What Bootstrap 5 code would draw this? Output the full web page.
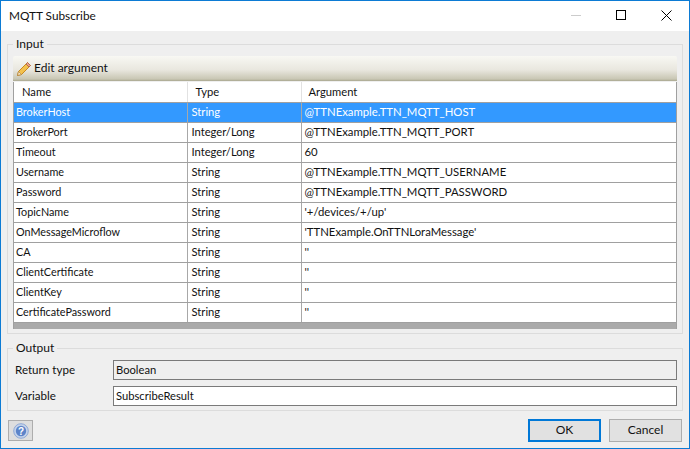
<!doctype html>
<html lang="en">
<head>
<meta charset="utf-8">
<title>MQTT Subscribe</title>
<link href="https://cdn.jsdelivr.net/npm/bootstrap@5.3.0/dist/css/bootstrap.min.css" rel="stylesheet">
<style>
html,body{margin:0;height:449px;overflow:hidden}
body{font-family:"Lato","Noto Sans","Liberation Sans",sans-serif;font-size:12px;line-height:16px;color:#111;background:#efefef}
.win{width:690px;height:449px;border:1px solid #0c7bd4;display:flex;flex-direction:column;background:#efefef}
.titlebar{height:30px;background:#fff;padding-left:8px;font-size:11.8px}
.winbtn{width:45px;height:30px;display:flex;align-items:center;justify-content:center;padding-bottom:2px}
.winbtn.cl{width:46px}
.body-area{padding:6px 6px 0 6px}
.grp{border:1px solid #dcdcdc;margin:0;padding:0 5px;min-width:0}
.grp legend{float:none;width:auto;font-size:12px;line-height:14px;margin:0;padding:0 3px;color:#111}
.grp-in{height:297px}
.grp-out{height:70px;margin-top:7px}
.tool{height:25px;background:linear-gradient(#f8f8f3,#e9e7df 55%,#c9c7b4 92%,#a9a78f);display:flex;align-items:center;padding-left:3px;gap:2px;margin-top:5px;border-radius:2px 2px 0 0}
.tool span{font-size:12px;padding-bottom:2px}
.tbl-wrap{margin-top:1px;background:#aaa;border-left:1px solid #a0a0a0;border-right:1px solid #a0a0a0;height:247px}
.grid{width:100%;table-layout:fixed;margin:0;border-collapse:collapse;font-size:11.2px;background:#fff}
.grid th,.grid td{height:20px;padding:1px 0 0 4px;vertical-align:top;border:0;border-bottom:1px solid #a0a0a0;border-right:1px solid #a8a8a8;font-weight:400;line-height:16px;white-space:nowrap;color:#111;background:#fff;box-shadow:none}
.grid th{padding-top:2px;padding-left:8px;border-right-color:#e2e2e2}
.grid td:first-child{font-size:10.8px;padding-left:2px}
.grid td:nth-child(3){font-size:11.33px;padding-left:3px}
.grid th:nth-child(3){padding-left:7px}
.grid td:last-child,.grid th:last-child{border-right:0}
.grid tr.sel td{background:#3399ff;color:#fff}
.c1{width:173px}.c2{width:114px}
.fld-row{display:flex;align-items:center;height:20px;margin-bottom:6px;padding-left:2px}
.fld-row label{width:98px;margin:0;font-size:11.6px;color:#111}
.fld{flex:1;height:20px;border:1px solid #7a7a7a;padding:0 2px;font-size:11.2px;line-height:18px;color:#111;background:#fff}
.fld.ro{background:#efefef}
.first-row{margin-top:5px}
.foot{padding:9px 7px 0 7px}
.help{width:25px;height:21px;border:1px solid #adadad;background:#dedede;display:flex;align-items:center;justify-content:center}
.dlg{width:73px;height:23px;font-size:12px;line-height:16px;padding:0 0 2px;border-radius:0;background:#e1e1e1;border:1px solid #adadad;color:#111;margin-top:-1px}
.dlg.pri{border:2px solid #0078d7}
</style>
</head>
<body>
<div class="win">
  <div class="titlebar d-flex align-items-center justify-content-between">
    <span>MQTT Subscribe</span>
    <div class="d-flex">
      <div class="winbtn"><svg width="10" height="10" viewBox="0 0 10 10"><path d="M0 5.500h10" stroke="#ccc" fill="none"/></svg></div>
      <div class="winbtn"><svg width="10" height="10" viewBox="0 0 10 10"><rect x=".5" y=".5" width="9" height="9" fill="none" stroke="#000"/></svg></div>
      <div class="winbtn cl"><svg width="11" height="11" viewBox="0 0 11 11"><path d="M.5.5l10 10M10.500.5l-10 10" stroke="#000" fill="none"/></svg></div>
    </div>
  </div>
  <div class="body-area">
    <fieldset class="grp grp-in">
      <legend>Input</legend>
      <div class="tool">
        <svg width="16" height="16" viewBox="0 0 16 16"><path d="M11.500 1.500l3 3-9 9-4 1 1-4z" fill="#f2c14e" stroke="#c98a1e"/><path d="M11.500 1.500l3 3-1.500 1.500-3-3z" fill="#e9a08a" stroke="#b86e4a"/><path d="M2.500 10.500l3 3-4 1z" fill="#f6e3c0" stroke="#a87a3a" stroke-width=".6"/></svg>
        <span>Edit argument</span>
      </div>
      <div class="tbl-wrap">
        <table class="table grid">
          <colgroup><col class="c1"><col class="c2"><col></colgroup>
          <thead><tr><th>Name</th><th>Type</th><th>Argument</th></tr></thead>
          <tbody>
            <tr class="sel"><td>BrokerHost</td><td>String</td><td>@TTNExample.TTN_MQTT_HOST</td></tr>
            <tr><td>BrokerPort</td><td>Integer/Long</td><td>@TTNExample.TTN_MQTT_PORT</td></tr>
            <tr><td>Timeout</td><td>Integer/Long</td><td>60</td></tr>
            <tr><td>Username</td><td>String</td><td>@TTNExample.TTN_MQTT_USERNAME</td></tr>
            <tr><td>Password</td><td>String</td><td>@TTNExample.TTN_MQTT_PASSWORD</td></tr>
            <tr><td>TopicName</td><td>String</td><td>'+/devices/+/up'</td></tr>
            <tr><td>OnMessageMicroflow</td><td>String</td><td>'TTNExample.OnTTNLoraMessage'</td></tr>
            <tr><td>CA</td><td>String</td><td>''</td></tr>
            <tr><td>ClientCertificate</td><td>String</td><td>''</td></tr>
            <tr><td>ClientKey</td><td>String</td><td>''</td></tr>
            <tr><td>CertificatePassword</td><td>String</td><td>''</td></tr>
          </tbody>
        </table>
      </div>
    </fieldset>
    <fieldset class="grp grp-out">
      <legend>Output</legend>
      <div class="fld-row first-row"><label>Return type</label><div class="fld ro">Boolean</div></div>
      <div class="fld-row"><label>Variable</label><div class="fld">SubscribeResult</div></div>
    </fieldset>
  </div>
  <div class="foot d-flex justify-content-between align-items-start">
    <div class="help"><svg width="16" height="16" viewBox="0 0 16 16"><circle cx="8" cy="8" r="7.300" fill="#c5d3ea" stroke="#8fa9d6"/><circle cx="8" cy="8" r="5.200" fill="#5c84c9"/><text x="8" y="11.500" text-anchor="middle" font-size="10" font-weight="700" font-family="Liberation Sans" fill="#fff">?</text></svg></div>
    <div class="d-flex gap-2">
      <button type="button" class="btn dlg pri">OK</button>
      <button type="button" class="btn dlg">Cancel</button>
    </div>
  </div>
</div>
<script src="https://cdn.jsdelivr.net/npm/bootstrap@5.3.0/dist/js/bootstrap.bundle.min.js"></script>
</body>
</html>
